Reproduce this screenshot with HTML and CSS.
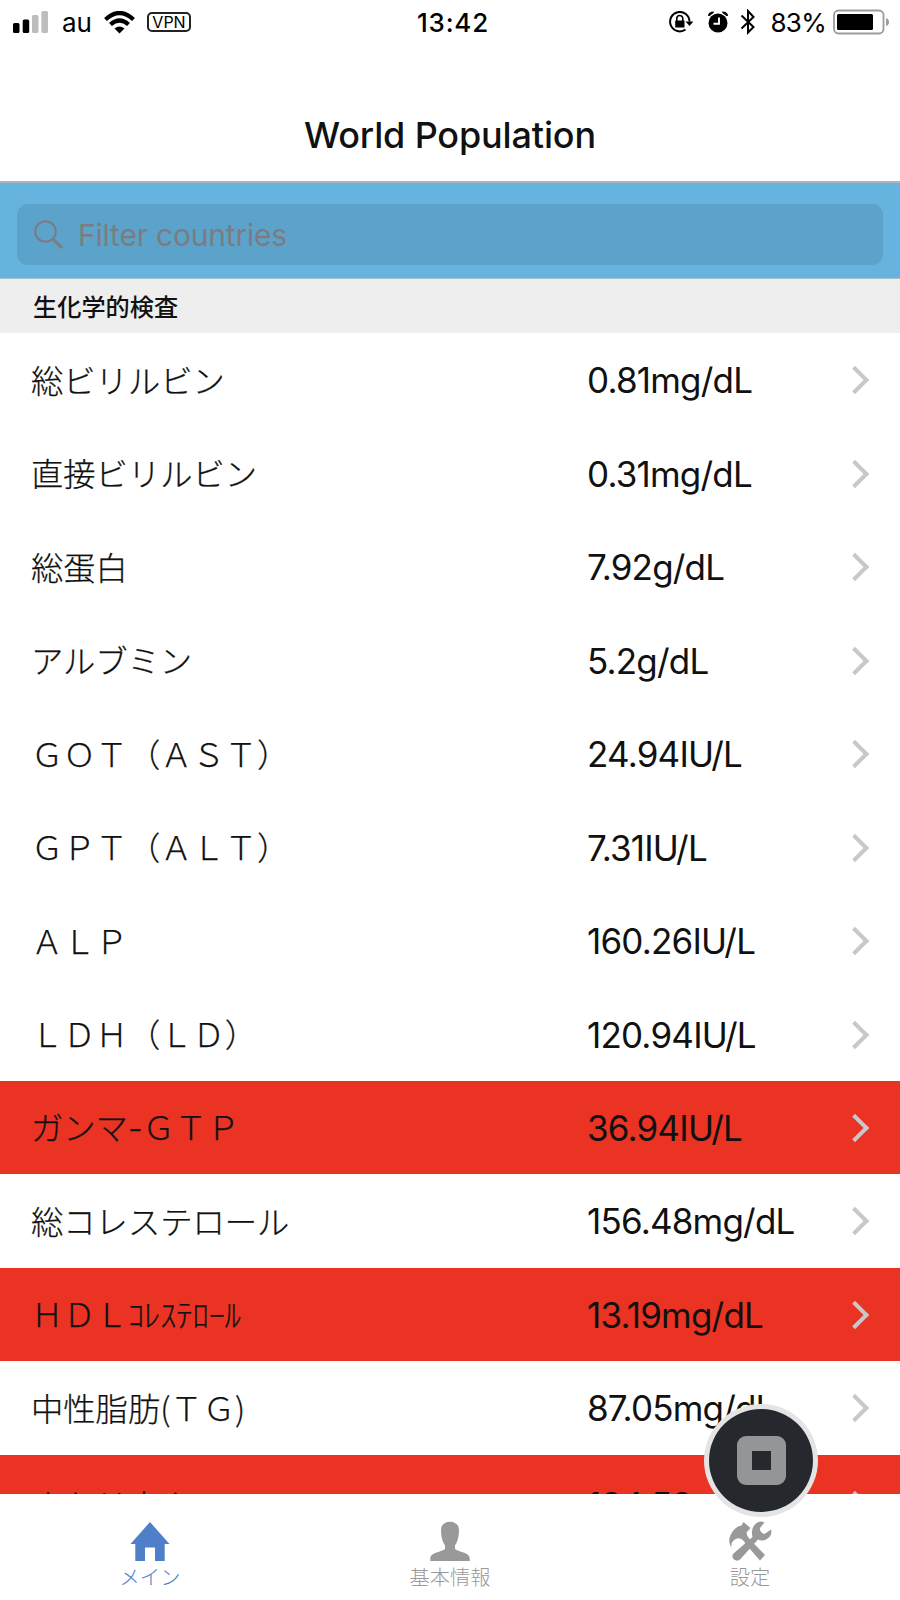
FILE: index.html
```html
<!DOCTYPE html>
<html lang="ja">
<head>
<meta charset="utf-8">
<title>World Population</title>
<link rel="stylesheet" href="styles.css">
</head>
<body>
<div class="screen">
  <header class="status">
    <div class="status-left">
      <svg class="signal" width="36" height="22" viewBox="0 0 36 22"><rect x="0" y="12" width="6.5" height="10" rx="1.5"/><rect x="9.7" y="8.5" width="6.5" height="13.5" rx="1.5"/><g fill="#bdbdbd"><rect x="19" y="4" width="6.5" height="18" rx="1.5"/><rect x="28.4" y="0" width="6.6" height="22" rx="1.5"/></g></svg>
      <span class="carrier">au</span>
      <svg class="wifi" width="32" height="23" viewBox="0 0 32 23"><g fill="none" stroke="#000" stroke-width="4.2"><path d="M1.5 8.5Q15.500-4.500 29.500 8.500"/><path d="M6.500 13.500Q15.500 5.500 24.500 13.500"/></g><path d="M10.500 17.500Q15.500 13.500 20.500 17.500L15.500 22.500Z"/></svg>
      <span class="vpn">VPN</span>
    </div>
    <span class="clock">13:42</span>
    <div class="status-right">
      <svg class="lock" width="24" height="22" viewBox="0 0 24 22"><path d="M16.500 18.500A9.700 9.700 0 1 1 20.500 10.500" fill="none" stroke="#000" stroke-width="2"/><path d="M16.500 10.500H24.500L20.500 15Z"/><rect x="6.200" y="9.500" width="9.300" height="7" rx=".5"/><path d="M7.800 10V7.500a3 3 0 0 1 6 0V10" fill="none" stroke="#000" stroke-width="1.600"/></svg>
      <svg class="alarm" width="20" height="22" viewBox="0 0 20 22"><circle cx="10" cy="12" r="9.500"/><path d="M0 5Q0 .5 6 .5L5.500 2L1.500 5ZM20 5Q20 .5 14 .5L14.500 2L18.500 5Z"/><path d="M11 6.500V12.800H5.500" fill="none" stroke="#fff" stroke-width="1.900"/></svg>
      <svg class="bluetooth" width="16" height="26" viewBox="0 0 16 26"><path d="M1.500 6.500L13.500 18L8 23.500V2L13.500 8L1.500 19.500" fill="none" stroke="#000" stroke-width="2"/></svg>
      <span class="percent">83%</span>
      <svg class="battery" width="57" height="26" viewBox="0 0 57 26"><rect x="1" y="1.500" width="49.500" height="23" rx="4.500" fill="none" stroke="#9b9b9b" stroke-width="1.800"/><rect x="4" y="5" width="36" height="16" rx="1.500"/><path d="M53 9Q56 10 56 13T53 17Z" fill="#9b9b9b"/></svg>
    </div>
  </header>
  <div class="titlebar"><h1>World Population</h1></div>
  <div class="search">
    <div class="field">
      <svg width="30" height="30" viewBox="0 0 30 30" fill="none" stroke="#7c7c80"><circle cx="11.500" cy="11.500" r="10.300" stroke-width="2"/><path d="M18.500 18.500L28 28" stroke-width="3"/></svg>
      <span>Filter countries</span>
    </div>
  </div>
  <h2 class="section">生化学的検査</h2>
  <main class="list">
    <div class="row"><span class="name">総ビリルビン</span><span class="value">0.81mg/dL</span><i class="chevron"></i></div>
    <div class="row"><span class="name">直接ビリルビン</span><span class="value">0.31mg/dL</span><i class="chevron"></i></div>
    <div class="row"><span class="name">総蛋白</span><span class="value">7.92g/dL</span><i class="chevron"></i></div>
    <div class="row"><span class="name">アルブミン</span><span class="value">5.2g/dL</span><i class="chevron"></i></div>
    <div class="row"><span class="name">ＧＯＴ（ＡＳＴ）</span><span class="value">24.94IU/L</span><i class="chevron"></i></div>
    <div class="row"><span class="name">ＧＰＴ（ＡＬＴ）</span><span class="value">7.31IU/L</span><i class="chevron"></i></div>
    <div class="row"><span class="name">ＡＬＰ</span><span class="value">160.26IU/L</span><i class="chevron"></i></div>
    <div class="row"><span class="name">ＬＤＨ（ＬＤ）</span><span class="value">120.94IU/L</span><i class="chevron"></i></div>
    <div class="row alert"><span class="name">ガンマ<span class="latin">-</span>ＧＴＰ</span><span class="value">36.94IU/L</span><i class="chevron"></i></div>
    <div class="row"><span class="name">総コレステロール</span><span class="value">156.48mg/dL</span><i class="chevron"></i></div>
    <div class="row alert"><span class="name">ＨＤＬｺﾚｽﾃﾛｰﾙ</span><span class="value">13.19mg/dL</span><i class="chevron"></i></div>
    <div class="row"><span class="name">中性脂肪(ＴＧ)</span><span class="value">87.05mg/dL</span><i class="chevron"></i></div>
    <div class="row alert partial"><span class="name">ナトリウム</span><span class="value">134.58</span><i class="chevron"></i></div>
  </main>
  <nav class="tabs">
    <div class="tab active"><svg width="44" height="42" viewBox="0 0 44 42"><path d="M22 1L41.500 23H36.700V40H27V26.500H17V40H7.300V23H2.500Z"/></svg><span>メイン</span></div>
    <div class="tab"><svg width="44" height="42" viewBox="0 0 44 42"><path d="M22 .7C27.500.7 31 4 31 9C31 16 29.500 21 27 24.500V28C30 30.500 41.700 32 41.700 37V40H2.300V37C2.300 32 14 30.500 17 28V24.500C14.500 21 13 16 13 9C13 4 16.500.7 22 .7Z"/></svg><span>基本情報</span></div>
    <div class="tab tools"><svg width="44" height="42" viewBox="0 0 44 42"><path d="M15.500 1L22.500 7L18.500 11.500Q18.500 15 22 18.500L37 34L32 39.500L18 23.500Q13 14 6 19Q2.500 22 3.500 27Q-.5 21 2.500 14Q6.500 5.500 13.500 4.500Z"/><path d="M5.500 32.500L24.500 16Q22.500 7 28 2.500Q32-.7 36.500 1.500L32 7Q31.500 11.500 36.500 13L43 8.500Q44.500 13 41 16.500Q36 21 30 18.500L12.500 38Q9.500 41 6 38.500Q3 35.500 5.500 32.500Z"/></svg><span>設定</span></div>
  </nav>
  <div class="recorder"><div class="stop"></div></div>
</div>
</body>
</html>
```
FILE: styles.css
```css
* { box-sizing: border-box; }
body { margin: 0; background: #fff; }
.screen { position: relative; width: 900px; height: 1600px; overflow: hidden; display: flex; flex-direction: column; font-family: Inter, "Noto Sans CJK JP", sans-serif; color: #111; }
.screen svg { display: block; flex: none; }
.status { height: 44px; flex: none; display: grid; grid-template-columns: 1fr auto 1fr; align-items: center; padding: 0 10px 0 13px; color: #000; font-size: 26px; }
.status-left, .status-right { display: flex; align-items: center; }
.status-right { justify-content: flex-end; }
.carrier { margin-left: 13px; width: 42px; }
.vpn { margin-left: 11px; width: 44px; height: 20px; border: 2px solid #222; border-radius: 5px; font-size: 16px; line-height: 17px; text-align: center; }
.clock { padding-left: 3px; font-size: 26px; font-weight: 500; letter-spacing: .8px; }
.alarm { margin-left: 15px; }
.bluetooth { margin-left: 12px; }
.percent { margin: 0 7px 0 14px; font-size: 26px; letter-spacing: -.7px; }
.titlebar { height: 139px; flex: none; border-bottom: 2px solid #afb5b9; padding-top: 67px; text-align: center; }
h1 { margin: 0; font-size: 36px; line-height: 48px; font-weight: 450; letter-spacing: -.15px; }
.search { height: 96px; flex: none; background: #66b3df; border-bottom: 1px solid #a9bfcc; padding: 21px 17px 13px; }
.field { height: 61px; border-radius: 11px; background: #5ca3cc; display: flex; align-items: center; gap: 14px; padding-left: 17px; color: #7c7c80; font-size: 30px; letter-spacing: -.2px; }
.section { margin: 0; height: 54px; flex: none; background: #eee; padding-left: 33px; font: 500 24.200px/53px "Noto Sans CJK JP", sans-serif; }
.list { height: 1160.500px; flex: none; overflow: hidden; }
.row { height: 93.480px; display: grid; grid-template-columns: 556px 1fr 21px; align-items: center; padding: 0 30px 0 31px; }
.row.alert { background: #ea3323; }
.row.partial { padding-top: 6px; }
.name { padding-bottom: 2px; font-family: "Noto Sans CJK JP", sans-serif; font-weight: 300; font-size: 32.300px; white-space: nowrap; -webkit-text-stroke: .25px currentColor; }
.latin { font-family: Inter, sans-serif; }
.value { padding-top: 1px; font-size: 35px; font-weight: 380; white-space: nowrap; letter-spacing: -.8px; }
.chevron { width: 20px; height: 20px; border: solid #c7c7cc; border-width: 4px 4px 0 0; transform: rotate(45deg); justify-self: end; margin: 1px 5px 0 0; }
.tabs { flex: 1; display: grid; grid-template-columns: repeat(3, 1fr); padding-top: 27px; background: #fff; }
.tab { display: flex; flex-direction: column; align-items: center; color: #999; fill: #999; font: 300 20.300px/26px "Noto Sans CJK JP", sans-serif; }
.tab.active { color: #507fc9; fill: #507fc9; }
.recorder { position: absolute; left: 704px; top: 1404px; width: 114px; height: 113px; border: 5px solid #e4e4e4; border-radius: 50%; background: #25282d; display: grid; place-items: center; }
.stop { width: 49px; height: 49px; border: 15px solid #949597; border-radius: 9px; }
```
